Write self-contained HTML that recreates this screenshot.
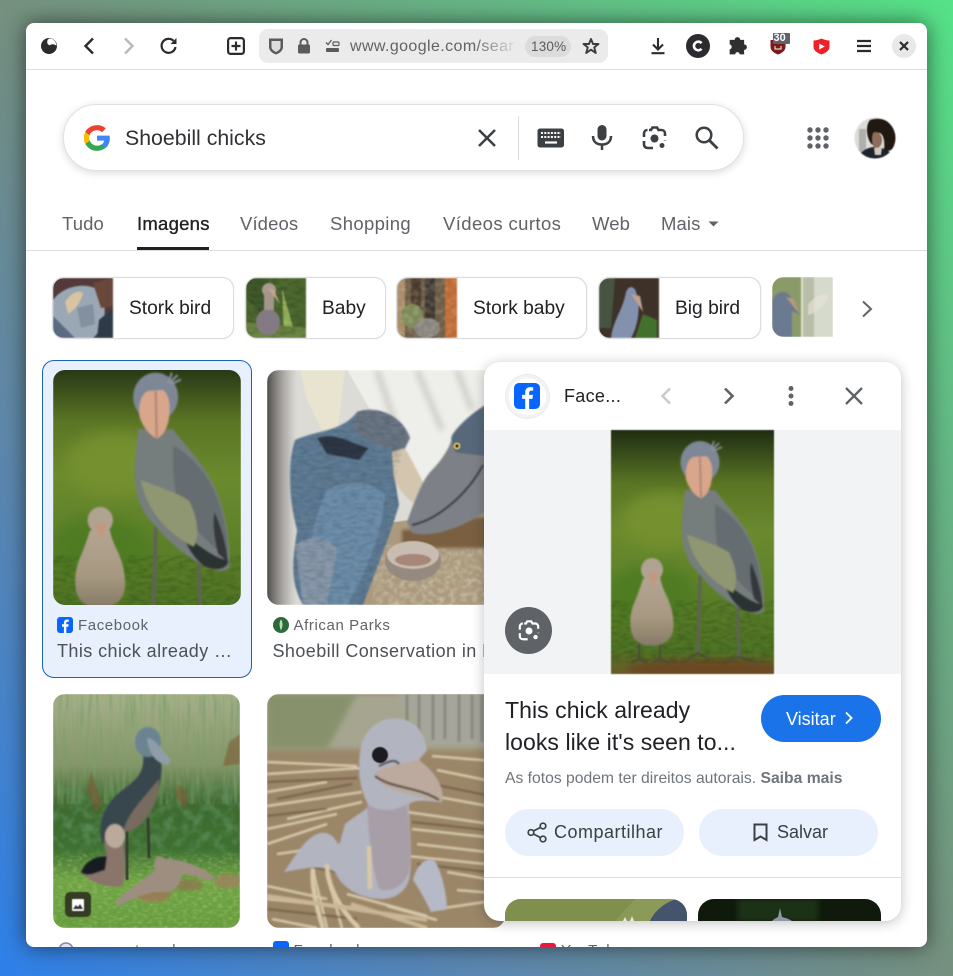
<!DOCTYPE html>
<html><head><meta charset="utf-8">
<style>
html,body{margin:0;padding:0;width:953px;height:976px;overflow:hidden}
body{position:relative;font-family:"Liberation Sans",sans-serif;background:linear-gradient(to top right,#2d80ea 0%,#5a86b0 25%,#75907f 50%,#66b585 75%,#55e288 100%)}
#win{position:absolute;left:26px;top:23px;width:901px;height:924px;background:#fff;border-radius:8px;overflow:hidden;box-shadow:0 0 22px rgba(0,0,0,.55)}
#page{position:absolute;left:-26px;top:-23px;width:953px;height:976px}
.a,.t,svg.a{position:absolute}
.t{white-space:nowrap}
.chip{position:absolute;top:277px;height:60px;border:1px solid #dadce0;border-radius:12px;background:#fff;overflow:hidden;box-shadow:0 0 1px #ccc}
.chip svg{position:absolute;left:0;top:0;filter:blur(.7px)}
.chip span{position:absolute;top:20px;font-size:19.200px;line-height:22px;color:#202124;white-space:nowrap}
.tab{position:absolute;top:213px;font-size:18.500px;line-height:22px;color:#5f6368;white-space:nowrap;letter-spacing:.1px}
.src{position:absolute;font-size:15px;line-height:18px;color:#5f6368;white-space:nowrap;letter-spacing:.6px}
.ttl{position:absolute;font-size:18px;line-height:22px;color:#4d5156;white-space:nowrap;letter-spacing:.42px}
.img{position:absolute;border-radius:12px;overflow:hidden}
.img svg{filter:blur(.5px)}
</style></head><body>
<svg width="0" height="0" style="position:absolute">
<defs>
<linearGradient id="gbg" x1="0" y1="0" x2="0" y2="1">
<stop offset="0" stop-color="#1f2d10"/><stop offset=".08" stop-color="#34471a"/><stop offset=".22" stop-color="#5a7524"/><stop offset=".42" stop-color="#6b8a2e"/><stop offset=".7" stop-color="#5a7f28"/><stop offset=".9" stop-color="#4f7524"/><stop offset="1" stop-color="#6b5a26"/>
</linearGradient>
<linearGradient id="fade" x1="0" y1="0" x2="1" y2="0"><stop offset="0" stop-color="#4e4a48"/><stop offset="1" stop-color="#8c8885" stop-opacity="0"/></linearGradient>
<linearGradient id="reed" x1="0" y1="0" x2="0" y2="1"><stop offset="0" stop-color="#a6b08a"/><stop offset=".3" stop-color="#85966a"/><stop offset=".46" stop-color="#3f6a30"/><stop offset=".66" stop-color="#3e7030"/><stop offset=".8" stop-color="#6fa442"/><stop offset="1" stop-color="#669c3c"/></linearGradient>
<linearGradient id="chickg" x1="0" y1="0" x2="0" y2="1"><stop offset="0" stop-color="#b3a594"/><stop offset=".6" stop-color="#a6987f"/><stop offset="1" stop-color="#857a66"/></linearGradient>
<clipPath id="blueb"><path d="M28 70C50 60 75 62 90 42C110 35 135 45 143 68L135 85L128 110L132 135C120 175 105 210 96 235H36C22 210 26 190 30 160C22 130 20 95 28 70Z"/></clipPath>
<filter id="b1"><feGaussianBlur stdDeviation=".7"/></filter>
<filter id="b2"><feGaussianBlur stdDeviation="1.500"/></filter>
<filter id="b3"><feGaussianBlur stdDeviation="3"/></filter>
<filter id="b6"><feGaussianBlur stdDeviation="7"/></filter>
<filter id="noise" x="0" y="0" width="100%" height="100%"><feTurbulence type="fractalNoise" baseFrequency=".12 .3" numOctaves="3" seed="4"/><feColorMatrix values="0 0 0 0 0  0 0 0 0 0  0 0 0 0 0  1.600 0 0 0 -.55"/></filter>
<filter id="noiseL" x="0" y="0" width="100%" height="100%"><feTurbulence type="fractalNoise" baseFrequency=".18 .22" numOctaves="3" seed="9"/><feColorMatrix values="0 0 0 0 1  0 0 0 0 1  0 0 0 0 .8  1.500 0 0 0 -.6"/></filter>
<filter id="noiseV" x="0" y="0" width="100%" height="100%"><feTurbulence type="fractalNoise" baseFrequency=".3 .025" numOctaves="2" seed="3"/><feColorMatrix values="0 0 0 0 .2  0 0 0 0 .34  0 0 0 0 .14  2.400 0 0 0 -1"/></filter>
<filter id="noiseD" x="0" y="0" width="100%" height="100%"><feTurbulence type="fractalNoise" baseFrequency=".1" numOctaves="2" seed="7"/><feColorMatrix values="0 0 0 0 .1  0 0 0 0 .26  0 0 0 0 .1  2.600 0 0 0 -1.100"/></filter>
<filter id="noiseP" x="0" y="0" width="100%" height="100%"><feTurbulence type="fractalNoise" baseFrequency=".2 .5" numOctaves="2" seed="12"/><feColorMatrix values="0 0 0 0 .8  0 0 0 0 .86  0 0 0 0 .6  2.200 0 0 0 -1"/></filter>
<symbol id="shoe" viewBox="0 0 163 243" preserveAspectRatio="none">
<rect width="163" height="243" fill="url(#gbg)"/>
<ellipse cx="55" cy="90" rx="45" ry="28" fill="#74902e" filter="url(#b6)"/>
<ellipse cx="40" cy="165" rx="45" ry="30" fill="#4f7c24" filter="url(#b6)"/>
<ellipse cx="95" cy="238" rx="80" ry="9" fill="#6a4a22" filter="url(#b3)"/>
<rect y="170" width="163" height="62" filter="url(#noise)" opacity=".22"/>
<g filter="url(#b1)">
<path d="M89 145L87 222M126 160L128 226" stroke="#5f6355" stroke-width="3.400" fill="none"/>
<path d="M74 60C72 80 70 90 71 105C72 120 78 135 90 145C100 158 115 170 130 178C140 183 150 185 153 180C154 160 150 130 140 110C132 92 118 78 104 60Z" fill="#767d7d"/>
<path d="M104 74C122 84 140 104 147 135C151 150 152 165 151 172C135 160 118 142 108 122C104 108 104 90 104 74Z" fill="#656d70"/>
<path d="M112 150C125 160 140 172 152 174C152 182 140 184 130 178C122 172 116 162 112 150Z" fill="#2b3032"/>
<path d="M140 132C146 145 150 160 152 176L143 168C140 155 138 142 140 132Z" fill="#34393b"/>
<path d="M76 104C90 110 106 114 118 122C126 138 127 152 122 162C105 154 82 135 76 104Z" fill="#8f9672"/>
<ellipse cx="89" cy="32" rx="19.500" ry="21" fill="#7d8795"/>
<path d="M100 20L103 11M101 20L108 13M102 21L111 17" stroke="#8a929c" stroke-width="1.800" fill="none"/>
<path d="M82 27C76 30 74 40 75 49C78 59 85 66 90 68C96 66 101 56 101 45C102 36 99 28 95 26Z" fill="#d9a68c"/>
<path d="M89 27L90 67" stroke="#a98573" stroke-width="1.800"/>
<path d="M76 229L87 222L98 229M112 233L128 226L146 231" stroke="#4a4a3a" stroke-width="1.800" fill="none"/>
<path d="M28 210L28 228M49 210L49 228M20 232L28 228L36 232M42 232L49 228L58 232" stroke="#4a4a3a" stroke-width="2" fill="none"/>
<path d="M32 148C30 155 28 160 25 168C20 178 18 190 20 200C22 210 30 215 40 215C52 215 60 210 62 200C64 188 60 174 56 166C52 158 50 152 49 146Z" fill="url(#chickg)"/>
<ellipse cx="41" cy="139" rx="11" ry="11.500" fill="#b1a392"/>
<path d="M36 142L47 142L43 155L41 156Z" fill="#c2997f"/>
</g>
</symbol>
</defs>
</svg>

<div id="win"><div id="page">

<!-- toolbar -->
<div class="a" style="left:26px;top:69px;width:901px;height:1px;background:#dcdcdc"></div>
<svg class="a" style="left:40px;top:37px" width="18" height="18" viewBox="0 0 18 18"><circle cx="9" cy="9" r="8" fill="#2b2b2e"/><path d="M9.500 1.400C13.500 1.600 16.400 4.800 16.500 8.800A5.200 5.200 0 0 0 9.500 8.400A3.800 3.800 0 0 1 9.500 1.400Z" fill="#fff"/></svg>
<svg class="a" style="left:80px;top:36px" width="20" height="20" viewBox="0 0 20 20"><path d="M13 2.500L5.500 10L13 17.500" fill="none" stroke="#2b2b2e" stroke-width="2.400"/></svg>
<svg class="a" style="left:118px;top:36px" width="20" height="20" viewBox="0 0 20 20"><path d="M7 2.500L14.500 10L7 17.500" fill="none" stroke="#b9b9bb" stroke-width="2.400"/></svg>
<svg class="a" style="left:159px;top:36px" width="20" height="20" viewBox="0 0 20 20"><path d="M16.500 11A7 7 0 1 1 14.500 4.800" fill="none" stroke="#2b2b2e" stroke-width="2.200"/><path d="M17.500 2V8H11.500Z" fill="#2b2b2e"/></svg>
<svg class="a" style="left:227px;top:37px" width="18" height="18" viewBox="0 0 18 18"><rect x="1.100" y="1.100" width="15.800" height="15.800" rx="2.500" fill="none" stroke="#2b2b2e" stroke-width="2.200"/><path d="M9 4.500V13.500M4.500 9H13.500" stroke="#2b2b2e" stroke-width="2.200"/></svg>
<div class="a" style="left:259px;top:29px;width:349px;height:34px;background:#ebebeb;border-radius:9px"></div>
<svg class="a" style="left:268px;top:37px" width="16" height="18" viewBox="0 0 16 18"><path d="M1 1.500H15V10C15 14 11 16.500 8 17.500C5 16.500 1 14 1 10Z" fill="#5b5b5e"/><path d="M3.500 4H12.500V10C12.500 12.500 10 14 8 15C6 14 3.500 12.500 3.500 10Z" fill="#dcdcdc"/></svg>
<svg class="a" style="left:297px;top:38px" width="14" height="16" viewBox="0 0 14 16"><path d="M3.500 7V4.500A3.500 3.500 0 0 1 10.500 4.500V7" fill="none" stroke="#5b5b5e" stroke-width="2"/><rect x="1" y="6.500" width="12" height="9" rx="1.500" fill="#5b5b5e"/></svg>
<svg class="a" style="left:325px;top:39px" width="15" height="14" viewBox="0 0 15 14"><path d="M1 3.500L3 5.500L6.500 1" fill="none" stroke="#5b5b5e" stroke-width="1.300"/><rect x="8" y="3" width="6" height="3.500" rx="1" fill="none" stroke="#5b5b5e" stroke-width="1.200"/><rect x="1" y="9" width="13" height="4" rx="1" fill="#5b5b5e"/></svg>
<div class="t" style="left:350px;top:37px;font-size:16px;line-height:20px;color:#636366;letter-spacing:.4px;width:165px;overflow:hidden;-webkit-mask-image:linear-gradient(to right,#000 75%,rgba(0,0,0,.1));">www.google.com/sear</div>
<div class="a" style="left:525px;top:36px;width:46px;height:21px;background:#dcdcdc;border-radius:11px"></div>
<div class="t" style="left:531px;top:39px;font-size:13.500px;line-height:16px;color:#5b5b5e;letter-spacing:.2px">130%</div>
<svg class="a" style="left:582px;top:37px" width="18" height="18" viewBox="0 0 18 18"><path d="M9 2L11 7H16.500L12.200 10.400L13.800 16L9 12.700L4.200 16L5.800 10.400L1.500 7H7Z" fill="none" stroke="#3c3c3f" stroke-width="1.900" stroke-linejoin="round"/></svg>
<svg class="a" style="left:650px;top:37px" width="16" height="18" viewBox="0 0 16 18"><path d="M8 1V12M3 7.500L8 12.500L13 7.500" fill="none" stroke="#2b2b2e" stroke-width="2.100"/><path d="M1.500 16.200H14.500" stroke="#2b2b2e" stroke-width="2.100"/></svg>
<div class="a" style="left:686px;top:34px;width:24px;height:24px;border-radius:50%;background:#2c2c30"></div>
<svg class="a" style="left:692px;top:40px" width="12" height="12" viewBox="0 0 12 12"><path d="M9.500 3.200A4.300 4.300 0 1 0 9.500 8.800" fill="none" stroke="#fff" stroke-width="2.600"/></svg>
<svg class="a" style="left:728px;top:36px" width="20" height="20" viewBox="0 0 18 18"><path d="M6 3.500A2.500 2.500 0 0 1 11 3.500H14.500V7.500A2.500 2.500 0 0 1 14.500 12.500V16.500H10.500A2 2 0 0 0 6.500 16.500H1.500V12A2.300 2.300 0 0 0 1.500 7.500V3.500Z" fill="#2f2f32"/></svg>
<svg class="a" style="left:770px;top:38px" width="16" height="17" viewBox="0 0 16 17"><path d="M0.500 2H15.500V9C15.500 13 11 15.500 8 16.500C5 15.500 0.500 13 0.500 9Z" fill="#7c1a1a"/><path d="M5 8V11H11V8" stroke="#e8cfcf" stroke-width="1.200" fill="none"/></svg>
<div class="a" style="left:773px;top:33px;width:17px;height:11px;background:#5f6368;border-radius:1px"></div>
<div class="t" style="left:773.500px;top:33px;font-size:11px;line-height:11px;color:#fff;font-weight:bold;letter-spacing:0">30</div>
<svg class="a" style="left:813px;top:38px" width="17" height="17" viewBox="0 0 17 17"><path d="M0.500 2.500C3.500 2.500 6 1.500 8.500 0.500C11 1.500 13.500 2.500 16.500 2.500V9C16.500 13 11.500 15.500 8.500 16.500C5.500 15.500 0.500 13 0.500 9Z" fill="#f02028"/><path d="M6.200 5.500L11.800 8.500L6.200 11.500Z" fill="#fff"/></svg>
<svg class="a" style="left:856px;top:39px" width="16" height="14" viewBox="0 0 16 14"><path d="M1 2H15M1 7H15M1 12H15" stroke="#2b2b2e" stroke-width="2.200"/></svg>
<div class="a" style="left:892px;top:34px;width:24px;height:24px;border-radius:50%;background:#e8e8e8"></div>
<svg class="a" style="left:899px;top:41px" width="10" height="10" viewBox="0 0 10 10"><path d="M1 1L9 9M9 1L1 9" stroke="#2b2b2e" stroke-width="2.200"/></svg>

<!-- search -->
<div class="a" style="left:63px;top:104px;width:679px;height:65px;border:1px solid #dfe1e5;border-radius:33px;background:#fff;box-shadow:0 2px 8px rgba(32,33,36,.16)"></div>
<svg class="a" style="left:83px;top:124px" width="28" height="28" viewBox="0 0 48 48"><path fill="#4285f4" d="M46 24.500c0-1.600-.1-3.100-.4-4.600H24v8.700h12.300c-.5 2.800-2.100 5.200-4.500 6.800v5.600h7.300C43.400 37 46 31.300 46 24.500z"/><path fill="#34a853" d="M24 46c6.100 0 11.200-2 15-5.500l-7.300-5.600c-2 1.400-4.600 2.200-7.700 2.200-5.900 0-10.900-4-12.700-9.300H3.800v5.800C7.500 41 15.200 46 24 46z"/><path fill="#fbbc05" d="M11.300 28.800c-.5-1.400-.7-2.900-.7-4.800s.3-3.300.7-4.800v-5.800H3.800C2.300 16.400 1.500 20.100 1.500 24s.8 7.600 2.300 10.600z"/><path fill="#ea4335" d="M24 10.700c3.300 0 6.300 1.100 8.600 3.400l6.500-6.500C35.200 4 30.100 2 24 2 15.200 2 7.500 7 3.800 13.400l7.500 5.800c1.800-5.300 6.800-8.500 12.700-8.500z"/></svg>
<div class="t" style="left:125px;top:125px;font-size:21.300px;line-height:26px;color:#303134;">Shoebill chicks</div>
<svg class="a" style="left:477px;top:128px" width="20" height="20" viewBox="0 0 20 20"><path d="M2 2L18 18M18 2L2 18" stroke="#3c4043" stroke-width="2.500"/></svg>
<div class="a" style="left:518px;top:116px;width:1px;height:44px;background:#dadce0"></div>
<svg class="a" style="left:537px;top:128px" width="28" height="20" viewBox="0 0 28 20"><rect x=".5" y=".5" width="26.500" height="19" rx="2.500" fill="#3c4043"/><path d="M4 5H24M4 9H24" stroke="#fff" stroke-width="2" stroke-dasharray="2 1.300"/><path d="M8 14.500H20" stroke="#fff" stroke-width="2.200"/></svg>
<svg class="a" style="left:590px;top:124px" width="24" height="26" viewBox="0 0 24 26"><rect x="7.500" y="1" width="9" height="15.500" rx="4.500" fill="#3c4043"/><path d="M3 12C3 18 7 20.500 12 20.500S21 18 21 12M12 20V26" fill="none" stroke="#3c4043" stroke-width="2.500"/></svg>
<svg class="a" style="left:642px;top:126px" width="25" height="24" viewBox="0 0 25 24"><path d="M7 4H9L10.500 1.500H15L16.500 4H19.500C21.500 4 23 5.500 23 7.500V10M23 14.500V15M11 22H6C3.500 22 2 20.500 2 18.500V15M2 11V7.500C2 5.500 3.500 4 5.500 4" fill="none" stroke="#3c4043" stroke-width="2.600"/><circle cx="12.500" cy="12.500" r="4" fill="#3c4043"/><circle cx="20" cy="19.500" r="2.500" fill="#3c4043"/></svg>
<svg class="a" style="left:694px;top:125px" width="25" height="25" viewBox="0 0 25 25"><circle cx="10" cy="10" r="7.300" fill="none" stroke="#3c4043" stroke-width="2.500"/><path d="M15 15L23.500 23.500" stroke="#3c4043" stroke-width="2.800"/></svg>
<svg class="a" style="left:807px;top:127px" width="22" height="22" viewBox="0 0 22 22" fill="#5f6368"><circle cx="3" cy="3" r="2.700"/><circle cx="11" cy="3" r="2.700"/><circle cx="19" cy="3" r="2.700"/><circle cx="3" cy="11" r="2.700"/><circle cx="11" cy="11" r="2.700"/><circle cx="19" cy="11" r="2.700"/><circle cx="3" cy="19" r="2.700"/><circle cx="11" cy="19" r="2.700"/><circle cx="19" cy="19" r="2.700"/></svg>
<svg class="a" style="left:854px;top:117px;filter:blur(.5px)" width="42" height="42" viewBox="0 0 42 42"><clipPath id="av"><circle cx="21" cy="21" r="20.500"/></clipPath><g clip-path="url(#av)"><rect width="42" height="42" fill="#dcdcd8"/><rect width="7" height="24" x="5" y="12" fill="#aeb0ae"/><path d="M4 42C6 34 14 30 21 30S38 34 40 42Z" fill="#1e2530"/><path d="M16 3C30 -2 44 8 42 22C42 32 34 36 30 33C31 26 30 18 26 16C21 15 19 20 19 28C14 26 10 10 16 3Z" fill="#221812"/><path d="M19 16C23 13 28 17 28 23C28 29 24 32 21 31C18 29 17 21 19 16Z" fill="#8e6c5a"/><path d="M20 31L28 30L27 38L21 38Z" fill="#cfc8bf"/></g></svg>

<!-- tabs -->
<div class="tab" style="left:62px">Tudo</div>
<div class="tab" style="left:137px;color:#202124;-webkit-text-stroke:.35px #202124;letter-spacing:.25px">Imagens</div>
<div class="tab" style="left:240px">Vídeos</div>
<div class="tab" style="left:330px;letter-spacing:.35px">Shopping</div>
<div class="tab" style="left:443px;letter-spacing:.4px">Vídeos curtos</div>
<div class="tab" style="left:592px">Web</div>
<div class="tab" style="left:661px">Mais</div>
<svg class="a" style="left:708px;top:221px" width="11" height="6" viewBox="0 0 11 6"><path d="M.5 .5H10.500L5.500 5.500Z" fill="#5f6368"/></svg>
<div class="a" style="left:137px;top:247px;width:72px;height:3px;background:#202124"></div>
<div class="a" style="left:26px;top:250px;width:901px;height:1px;background:#dadce0"></div>

<!-- chips -->
<div class="chip" style="left:52px;width:180px">
<svg width="60" height="60" viewBox="0 0 60 60"><rect width="60" height="60" fill="#54393a"/><path d="M0 22C10 8 30 5 42 10C58 26 52 50 40 60H0Z" fill="#9aa7b4"/><path d="M12 24C18 14 26 12 30 15C28 24 22 32 15 36Z" fill="#d8c3a2"/><path d="M0 38L22 60H0Z" fill="#5a6a80"/><path d="M46 42L60 30V60H44Z" fill="#2f3a48"/><path d="M40 5L60 0V28L48 30Z" fill="#69483b"/><path d="M24 30L40 26L42 46L28 50Z" fill="#8390a0"/></svg><span style="left:76px">Stork bird</span></div>
<div class="chip" style="left:245px;width:139px">
<svg width="60" height="60" viewBox="0 0 60 60"><rect width="60" height="60" fill="#4e6a30"/><path d="M0 0H22L30 30L14 34L0 20Z" fill="#3f5a2c"/><path d="M36 10L50 60H38Z" fill="#9ab860"/><path d="M0 44L60 50V60H0Z" fill="#6d8744"/><rect width="60" height="60" filter="url(#noise)" opacity=".25"/><ellipse cx="22" cy="44" rx="12" ry="13" fill="#837a84"/><ellipse cx="23" cy="12" rx="7" ry="7" fill="#a99a8e"/><path d="M18 14H28V32H18Z" fill="#a5968c"/><path d="M22 10L34 26L28 12Z" fill="#c9a894"/></svg><span style="left:76px">Baby</span></div>
<div class="chip" style="left:396px;width:189px">
<svg width="60" height="60" viewBox="0 0 60 60"><rect width="60" height="60" fill="#6c5c46"/><rect x="0" width="8" height="60" fill="#a98c68"/><rect x="14" width="10" height="40" fill="#4a3a2c"/><rect x="28" width="10" height="60" fill="#3e3830"/><rect x="48" width="12" height="60" fill="#bf6a33"/><ellipse cx="15" cy="38" rx="11" ry="12" fill="#7c8a58"/><ellipse cx="30" cy="50" rx="13" ry="10" fill="#86837c"/><rect width="60" height="60" filter="url(#noiseL)" opacity=".3"/></svg><span style="left:76px">Stork baby</span></div>
<div class="chip" style="left:598px;width:161px">
<svg width="60" height="60" viewBox="0 0 60 60"><rect width="60" height="60" fill="#3e3228"/><path d="M0 0H16L12 50H0Z" fill="#465440"/><path d="M36 60L44 36L58 42V60Z" fill="#44702e"/><path d="M12 60C14 42 24 32 27 14C30 6 37 8 38 18C42 32 38 50 32 60Z" fill="#8291ad"/><path d="M32 16L44 34L41 18Z" fill="#c2a08e"/></svg><span style="left:76px">Big bird</span></div>
<div class="a" style="left:772px;top:277px;width:61px;height:60px;border-radius:12px 0 0 12px;overflow:hidden">
<svg width="61" height="60" viewBox="0 0 61 60" style="filter:blur(.7px)"><rect width="30" height="60" fill="#8a9a68"/><rect x="30" width="31" height="60" fill="#b8bea8"/><rect x="29" width="2" height="60" fill="#e2e5c8"/><path d="M0 24C4 12 18 12 20 24L28 38L20 34V60H0Z" fill="#6a7a90"/><path d="M14 20L28 38L22 22Z" fill="#b9967f"/><path d="M36 28C44 16 56 16 56 20C52 30 44 36 36 38Z" fill="#dcd4c6"/><rect x="42" width="19" height="60" fill="#e2e6dc" opacity=".7"/></svg></div>
<svg class="a" style="left:860px;top:300px" width="14" height="18" viewBox="0 0 14 18"><path d="M3 1.500L11 9L3 16.500" fill="none" stroke="#5f6368" stroke-width="2"/></svg>

<!-- selected card -->
<div class="a" style="left:42px;top:360px;width:208px;height:316px;background:#e8f0fe;border:1px solid #1a62b8;border-radius:12px"></div>
<div class="img" style="left:53px;top:370px;width:188px;height:235px"><svg class="a" style="left:0;top:-10px" width="188" height="280"><use href="#shoe" width="188" height="280"/></svg></div>
<svg class="a" style="left:57px;top:617px" width="16" height="16" viewBox="0 0 16 16"><rect width="16" height="16" rx="3" fill="#0866ff"/><path d="M9.300 16V9.800H11.300L11.700 7.300H9.300V6C9.300 5.200 9.700 4.700 10.700 4.700H11.800V2.700C11.400 2.600 10.800 2.500 10.100 2.500C8.100 2.500 6.900 3.700 6.900 5.700V7.300H5V9.800H6.900V16Z" fill="#fff"/></svg>
<div class="src" style="left:78px;top:617px">Facebook</div>
<div class="ttl" style="left:57px;top:640px">This chick already …</div>

<!-- image 2 -->
<div class="img" style="left:267px;top:370px;width:238px;height:235px">
<svg width="238" height="235" viewBox="0 0 238 235">
<rect width="238" height="235" fill="#dcdbd6"/>
<path d="M80 0H238V120H150Z" fill="#eeeeea"/>
<path d="M110 0L130 60M150 0L175 60M190 0L205 40" stroke="#d0d0cb" stroke-width="6" filter="url(#b3)"/>
<path d="M33 0H78L70 66L55 60L40 30Z" fill="#e8e4cf"/>
<rect width="30" height="235" fill="url(#fade)"/>
<path d="M106 155L216 140L238 150V235H90Z" fill="#ab9a7e"/>
<rect x="106" y="175" width="132" height="60" filter="url(#noiseL)" opacity=".5"/>
<path d="M135 160C165 160 200 140 238 150V178H135Z" fill="#7a5e40" filter="url(#b2)"/>
<g filter="url(#b1)">
<path d="M28 70C50 60 75 62 90 42C110 35 135 45 143 68L135 85L128 110L132 135C120 175 105 210 96 235H36C22 210 26 190 30 160C22 130 20 95 28 70Z" fill="#5f7c95"/>
<path d="M90 42C110 35 135 45 143 68L135 82C118 78 100 72 85 60Z" fill="#6b7684"/>
<path d="M50 68C70 62 80 72 102 78L92 90L60 84Z" fill="#2d3744"/>
<path d="M60 120C80 110 105 110 118 125C115 165 100 200 80 235H40C40 190 45 150 60 120Z" fill="#6d8eaa"/>
<path d="M28 175C40 165 60 165 70 180L60 235H36Z" fill="#8798aa"/>
<path d="M125 82L138 78C150 100 165 130 171 142C150 142 132 122 127 108Z" fill="#d3c5ae"/>
<path d="M140 152C148 130 155 110 165 100C175 90 185 75 185 65C195 50 220 30 238 28V125C215 150 170 170 145 163Z" fill="#7d8187"/>
<path d="M184 68C195 50 220 30 238 28V90C225 85 200 85 188 82Z" fill="#56677a"/>
<path d="M145 155C170 150 200 125 216 95" fill="none" stroke="#2e3034" stroke-width="2"/>
</g>
<g clip-path="url(#blueb)"><rect x="24" y="40" width="115" height="195" filter="url(#noise)" opacity=".18"/></g>
<circle cx="190" cy="76" r="3.500" fill="#d8c060"/><circle cx="190" cy="76" r="1.500" fill="#222"/>
<ellipse cx="146" cy="191" rx="28" ry="20" fill="#96897f"/>
<ellipse cx="146" cy="185" rx="26" ry="14" fill="#c9bcb0"/>
<ellipse cx="146" cy="190" rx="18" ry="6" fill="#a8867a"/>
</svg></div>
<svg class="a" style="left:273px;top:617px" width="16" height="16" viewBox="0 0 16 16"><circle cx="8" cy="8" r="8" fill="#2d6a3a"/><path d="M8 2.500C10 5 10 9 8 13.500C6 9 6 5 8 2.500Z" fill="#b8dcb8"/></svg>
<div class="src" style="left:293.500px;top:617px">African Parks</div>
<div class="ttl" style="left:272.500px;top:640px">Shoebill Conservation in Ruanda</div>

<!-- image 3 -->
<div class="img" style="left:53px;top:694px;width:187px;height:234px">
<svg width="187" height="234" viewBox="0 0 187 234">
<rect width="187" height="234" fill="url(#reed)"/>
<rect width="187" height="110" filter="url(#noiseV)" opacity=".8"/>
<rect y="90" width="187" height="70" filter="url(#noiseD)" opacity=".9"/>
<rect y="160" width="187" height="74" filter="url(#noiseP)" opacity=".35"/>
<path d="M38 78L50 110L42 118L34 95ZM176 48L187 40V70L170 72ZM125 90L136 100L133 116L122 102Z" fill="#7d5a36" opacity=".6" filter="url(#b1)"/>
<ellipse cx="100" cy="200" rx="18" ry="8" fill="#9c7858" opacity=".85" filter="url(#b2)"/>
<ellipse cx="135" cy="191" rx="15" ry="6" fill="#8d7050" opacity=".7" filter="url(#b2)"/>
<ellipse cx="175" cy="187" rx="14" ry="7" fill="#a08060" opacity=".8" filter="url(#b2)"/>
<path d="M74 136L74 186M95 124L96 164" stroke="#3a3c34" stroke-width="2.800"/>
<g filter="url(#b1)">
<path d="M49 150C44 130 50 112 68 97C84 86 92 78 90 60L108 64C110 80 106 95 102 106C94 126 85 135 70 138C60 142 55 148 49 150Z" fill="#37464e"/>
<path d="M70 138C74 120 90 105 106 85C106 100 102 112 96 120C88 132 80 138 70 138Z" fill="#776a5e"/>
<ellipse cx="95" cy="48" rx="13" ry="15" fill="#6a8492"/>
<path d="M94 44C100 44 105 50 118 66L115 71C105 70 96 62 94 44Z" fill="#8e9ea8"/>
<path d="M28 176C36 166 46 163 54 160C50 150 50 136 60 134C70 136 72 150 72 178L70 192C55 194 36 190 28 176Z" fill="#8a746a"/>
<path d="M28 178C32 168 42 162 54 162L52 176C44 178 34 184 28 178Z" fill="#141a24"/>
<ellipse cx="62" cy="142" rx="10" ry="12" fill="#b9aa9c"/>
<path d="M62 208C75 196 90 186 102 176C98 165 106 158 112 165C128 165 148 172 162 183L156 187C145 183 132 178 128 182C128 192 120 200 106 198C92 198 78 206 66 212Z" fill="#9d8e80"/>
</g>
<rect x="12" y="198" width="26" height="25" rx="5" fill="#2f3322" opacity=".92"/>
<rect x="19" y="205" width="12" height="12" rx="1" fill="#fff"/>
<path d="M20 215L23 211L25 213L27 210L30 215Z" fill="#333"/>
</svg></div>

<!-- image 4 -->
<div class="img" style="left:267px;top:694px;width:238px;height:234px">
<svg width="238" height="234" viewBox="0 0 238 234">
<rect width="238" height="234" fill="#9c8668"/>
<rect width="238" height="55" fill="#a6a690" filter="url(#b3)"/>
<path d="M0 0H90L60 55H0Z" fill="#87926c" filter="url(#b3)"/>
<path d="M130 0H238V50H165Z" fill="#a5a59b" filter="url(#b2)"/>
<path d="M140 0V40M152 0V42M166 0V46M178 0V45M192 0V48M205 0V45M215 0V48" stroke="#8a8a80" stroke-width="3" filter="url(#b1)"/>
<g fill="none" stroke="#dccfb2" stroke-width="2.600" opacity=".9" filter="url(#b1)">
<path d="M0 68L90 72M0 80L95 74M0 98L60 88M0 112L95 98M20 125L95 108M0 135L70 120M0 150L60 130M10 160L80 150M0 205L100 215M0 192L60 205"/>
<path d="M165 62L238 68M170 76L238 90M155 100L238 115M140 118L238 132M145 135L238 145M150 150L238 160M140 162L238 172M180 178L238 188M190 196L238 200M170 215L238 205"/>
<path d="M80 200L160 222M60 180L75 234M45 172L60 234M5 225L50 234M120 212L170 226"/>
</g>
<g fill="none" stroke="#5e4c38" stroke-width="2" opacity=".6" filter="url(#b1)">
<path d="M0 88L90 84M10 105L85 90M0 122L60 115M165 90L238 105M145 128L238 138M150 170L238 180M0 215L90 225M30 170L70 178"/>
</g>
<g filter="url(#b1)">
<path d="M17 178C28 162 38 145 50 140C60 136 68 142 72 152L78 130C88 122 96 118 102 112C92 95 90 75 94 52C100 30 118 22 135 25C150 28 158 40 160 56L152 66C170 80 178 95 175 108C165 108 150 104 142 110C142 130 146 160 143 180C142 195 130 205 115 205C95 205 75 195 68 178C55 170 35 175 17 178Z" fill="#b2b4c0"/>
<path d="M100 110C112 118 128 118 140 110C142 130 146 160 142 178C135 195 122 198 112 195C104 170 102 140 100 110Z" fill="#a89ea8"/>
<path d="M146 186C150 170 160 162 168 167C176 180 180 205 180 215L164 218C158 205 152 195 146 186Z" fill="#b6bac6"/>
<path d="M108 78C120 72 140 68 152 66C168 78 178 95 175 108C160 105 135 100 118 92C112 88 108 84 108 78Z" fill="#bcaa9e"/>
<path d="M108 82C125 95 150 92 172 106" fill="none" stroke="#54483f" stroke-width="2.200"/>
<path d="M112 72C120 68 128 64 132 70" fill="none" stroke="#3a3a3e" stroke-width="2"/>
</g>
<circle cx="113" cy="61" r="8" fill="#1c1c20"/>
<path d="M46 175C44 190 50 215 56 234M60 170C60 190 72 215 92 234M102 152L103 195" stroke="#d8c8a8" stroke-width="4.500" fill="none" filter="url(#b1)"/>
<path d="M0 202L160 226M84 210L160 234" stroke="#c8b694" stroke-width="4" fill="none" filter="url(#b1)"/>
</svg></div>

<!-- row 3 labels -->
<svg class="a" style="left:58px;top:942px" width="16" height="16" viewBox="0 0 16 16"><circle cx="8" cy="8" r="7" fill="#dfe3f0" stroke="#7f86a8" stroke-width="1.500"/></svg>
<div class="src" style="left:79px;top:942px">www.naturepl.com</div>
<svg class="a" style="left:273px;top:941px" width="16" height="16" viewBox="0 0 16 16"><rect width="16" height="16" rx="3" fill="#0866ff"/></svg>
<div class="src" style="left:293.500px;top:942px">Facebook</div>
<div class="a" style="left:540px;top:943px;width:16px;height:12px;border-radius:3px;background:#e8193c"></div>
<div class="src" style="left:561px;top:942px">YouTube</div>

<!-- panel -->
<div class="a" style="left:484px;top:362px;width:417px;height:559px;background:#fff;border-radius:16px;overflow:hidden;box-shadow:0 2px 12px rgba(32,33,36,.28)">
<div class="a" style="left:0;top:68px;width:417px;height:244px;background:#f1f3f4"></div>
<svg class="a" style="left:127px;top:68px;filter:blur(.4px)" width="163" height="244"><use href="#shoe" width="163" height="244"/></svg>
<div class="a" style="left:21px;top:245px;width:47px;height:47px;border-radius:50%;background:#5f6368"></div>
<svg class="a" style="left:34px;top:258px" width="22" height="21" viewBox="0 0 25 24"><path d="M7 4H9L10.500 1.500H15L16.500 4H19.500C21.500 4 23 5.500 23 7.500V10M23 14.500V15M11 22H6C3.500 22 2 20.500 2 18.500V15M2 11V7.500C2 5.500 3.500 4 5.500 4" fill="none" stroke="#fff" stroke-width="2.500"/><circle cx="12.500" cy="12.500" r="4" fill="#fff"/><circle cx="20" cy="19.500" r="2.500" fill="#fff"/></svg>
<div class="a" style="left:21px;top:12px;width:43px;height:43px;border-radius:50%;background:#fff;border:1px solid #e8eaed;box-shadow:inset 0 0 0 3px #f1f3f4"></div>
<svg class="a" style="left:30px;top:21px" width="26" height="26" viewBox="0 0 16 16"><rect width="16" height="16" rx="3" fill="#0866ff"/><path d="M9.300 16V9.800H11.300L11.700 7.300H9.300V6C9.300 5.200 9.700 4.700 10.700 4.700H11.800V2.700C11.400 2.600 10.800 2.500 10.100 2.500C8.100 2.500 6.900 3.700 6.900 5.700V7.300H5V9.800H6.900V16Z" fill="#fff"/></svg>
<div class="t" style="left:80px;top:23px;font-size:18px;line-height:22px;color:#202124;letter-spacing:.3px">Face...</div>
<svg class="a" style="left:174px;top:24px" width="16" height="20" viewBox="0 0 16 20"><path d="M12 2.500L4.500 10L12 17.500" fill="none" stroke="#c8cacd" stroke-width="2.400"/></svg>
<svg class="a" style="left:237px;top:24px" width="16" height="20" viewBox="0 0 16 20"><path d="M4 2.500L11.500 10L4 17.500" fill="none" stroke="#5f6368" stroke-width="2.600"/></svg>
<svg class="a" style="left:303px;top:23px" width="8" height="22" viewBox="0 0 8 22" fill="#5f6368"><circle cx="4" cy="3.500" r="2.500"/><circle cx="4" cy="11" r="2.500"/><circle cx="4" cy="18.500" r="2.500"/></svg>
<svg class="a" style="left:360px;top:24px" width="20" height="20" viewBox="0 0 20 20"><path d="M2 2L18 18M18 2L2 18" stroke="#5f6368" stroke-width="2.300"/></svg>
<div class="t" style="left:21px;top:332px;font-size:23px;line-height:32px;color:#202124;letter-spacing:.06px">This chick already<br>looks like it's seen to...</div>
<div class="a" style="left:277px;top:333px;width:120px;height:47px;border-radius:24px;background:#1a73e8"></div>
<div class="t" style="left:302px;top:346px;font-size:18px;line-height:22px;color:#fff">Visitar</div>
<svg class="a" style="left:359px;top:349px" width="12" height="14" viewBox="0 0 12 14"><path d="M3 1.500L8.500 7L3 12.500" fill="none" stroke="#fff" stroke-width="1.900"/></svg>
<div class="t" style="left:21px;top:408px;font-size:15.700px;line-height:18px;color:#70757a">As fotos podem ter direitos autorais. <b>Saiba mais</b></div>
<div class="a" style="left:21px;top:447px;width:179px;height:47px;border-radius:24px;background:#e8f0fe"></div>
<svg class="a" style="left:43px;top:460px" width="20" height="21" viewBox="0 0 20 21"><circle cx="16" cy="4" r="2.800" fill="none" stroke="#3c4043" stroke-width="1.700"/><circle cx="4" cy="10.500" r="2.800" fill="none" stroke="#3c4043" stroke-width="1.700"/><circle cx="16" cy="17" r="2.800" fill="none" stroke="#3c4043" stroke-width="1.700"/><path d="M6.500 9L13.500 5.400M6.500 12L13.500 15.600" stroke="#3c4043" stroke-width="1.700"/></svg>
<div class="t" style="left:70px;top:459px;font-size:18px;line-height:22px;color:#3c4043;letter-spacing:.5px">Compartilhar</div>
<div class="a" style="left:215px;top:447px;width:179px;height:47px;border-radius:24px;background:#e8f0fe"></div>
<svg class="a" style="left:269px;top:461px" width="15" height="19" viewBox="0 0 15 19"><path d="M1.500 1.500H13.500V17L7.500 13.500L1.500 17Z" fill="none" stroke="#3c4043" stroke-width="2"/></svg>
<div class="t" style="left:293px;top:459px;font-size:18px;line-height:22px;color:#3c4043">Salvar</div>
<div class="a" style="left:0;top:515px;width:417px;height:1px;background:#dadce0"></div>
<svg class="a" style="left:21px;top:537px;border-radius:16px 16px 0 0" width="182" height="22" viewBox="0 0 182 22"><rect width="182" height="22" fill="#8b9a58"/><path d="M0 0H130L110 22H0Z" fill="#7e8f4e"/><path d="M145 22C150 10 165 0 175 0H182V22Z" fill="#44546c"/><path d="M125 22L127 17L129 22ZM118 22L120 18L122 22Z" fill="#e8e8e0"/></svg>
<svg class="a" style="left:214px;top:537px;border-radius:16px 16px 0 0" width="183" height="22" viewBox="0 0 183 22"><rect width="183" height="22" fill="#0f1a0c"/><rect x="40" width="80" height="22" fill="#1c3316" filter="url(#b3)"/><path d="M74 22C76 20 78 19 80 18L82 9L84 18C88 19 91 20 94 22Z" fill="#8d97a8"/></svg>
</div>

</div></div>
</body></html>
